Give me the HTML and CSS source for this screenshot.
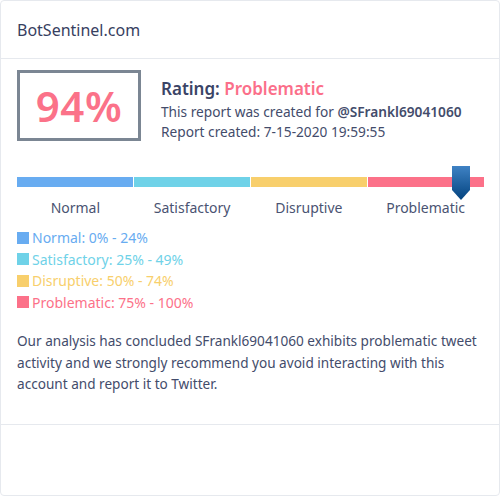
FILE: index.html
```html
<!DOCTYPE html>
<html lang="en">
<head>
<meta charset="utf-8">
<title>BotSentinel.com</title>
<link rel="stylesheet" href="styles.css">
</head>
<body>
<div class="card">
  <div class="card-header">BotSentinel.com</div>
  <div class="card-body">
    <div class="summary">
      <div class="score">94%</div>
      <div class="info">
        <div class="rating">Rating: <span class="rating-value">Problematic</span></div>
        <div class="meta">This report was created for <strong>@SFrankl69041060</strong></div>
        <div class="meta">Report created: 7-15-2020 19:59:55</div>
      </div>
    </div>

    <div class="scale">
      <div class="bar">
        <div class="seg seg-normal"></div>
        <div class="seg seg-satisfactory"></div>
        <div class="seg seg-disruptive"></div>
        <div class="seg seg-problematic"></div>
        <svg class="marker" style="left: 95.1%" width="18" height="34" viewBox="0 0 18 34">
          <defs>
            <linearGradient id="markerFill" x1="0" y1="0" x2="0" y2="1">
              <stop offset="0" stop-color="#3f82c4"/>
              <stop offset="1" stop-color="#03437f"/>
            </linearGradient>
          </defs>
          <polygon points="0,0 18,0 18,24 9,34 0,24" fill="url(#markerFill)"/>
        </svg>
      </div>
      <div class="labels">
        <span>Normal</span>
        <span>Satisfactory</span>
        <span>Disruptive</span>
        <span>Problematic</span>
      </div>
    </div>

    <ul class="legend">
      <li class="c-normal"><i class="swatch"></i>Normal: 0% - 24%</li>
      <li class="c-satisfactory"><i class="swatch"></i>Satisfactory: 25% - 49%</li>
      <li class="c-disruptive"><i class="swatch"></i>Disruptive: 50% - 74%</li>
      <li class="c-problematic"><i class="swatch"></i>Problematic: 75% - 100%</li>
    </ul>

    <p class="verdict">Our analysis has concluded SFrankl69041060 exhibits problematic tweet activity and we strongly recommend you avoid interacting with this account and report it to Twitter.</p>
  </div>
  <div class="card-footer"></div>
</div>
</body>
</html>
```
FILE: styles.css
```css
* {
  box-sizing: border-box;
}

html, body {
  margin: 0;
  padding: 0;
  background: #ffffff;
}

body {
  font-family: "Noto Sans", "Liberation Sans", sans-serif;
  color: #3d4665;
  font-size: 14px;
}

.card {
  width: 500px;
  height: 496px;
  border: 1px solid #e6e9ee;
  border-radius: 4px;
  display: flex;
  flex-direction: column;
}

.card-header {
  height: 58px;
  padding: 0 16px;
  display: flex;
  align-items: center;
  font-size: 16px;
  color: #37405f;
  border-bottom: 1px solid #e6e9ee;
}

.card-body {
  padding: 11px 16px 0;
  height: 366px;
  border-bottom: 1px solid #e6e9ee;
}

.card-footer {
  flex: 1;
}

.summary {
  display: flex;
  align-items: flex-start;
  gap: 20px;
}

.score {
  width: 124px;
  height: 71px;
  border: 3px solid #7b8693;
  display: flex;
  align-items: center;
  justify-content: center;
  font-size: 42px;
  font-weight: 600;
  color: #fb7289;
  letter-spacing: 0.5px;
}

.info {
  padding-top: 6px;
}

.rating {
  font-size: 17px;
  font-weight: 600;
  color: #3a4466;
  line-height: 26px;
}

.rating-value {
  color: #fb6f8a;
}

.meta {
  font-size: 13.7px;
  line-height: 20px;
  color: #434c6b;
}

.meta strong {
  font-weight: 600;
}

.scale {
  margin-top: 35px;
}

.bar {
  position: relative;
  display: flex;
  height: 10px;
  width: 467px;
}

.seg {
  flex: 1;
  height: 10px;
  border-right: 1px solid #ffffff;
}

.seg:last-of-type {
  border-right: 0;
}

.seg-normal { background: #68acf1; }
.seg-satisfactory { background: #6fd2e8; }
.seg-disruptive { background: #f8cf6c; }
.seg-problematic { background: #fc7189; }

.marker {
  position: absolute;
  top: -11px;
  margin-left: -9px;
}

.labels {
  display: flex;
  width: 467px;
  margin-top: 11px;
  line-height: 20px;
}

.labels span {
  flex: 1;
  text-align: center;
  font-size: 14px;
  color: #4a5372;
}

.legend {
  list-style: none;
  margin: 9px 0 0;
  padding: 0;
}

.legend li {
  display: flex;
  align-items: center;
  height: 21.5px;
  font-size: 14px;
}

.swatch {
  width: 12px;
  height: 12px;
  margin-right: 3px;
  background: currentColor;
}

.c-normal { color: #68acf1; }
.c-satisfactory { color: #6fd2e8; }
.c-disruptive { color: #f8cf6c; }
.c-problematic { color: #fc7189; }

.verdict {
  margin: 17px 0 0;
  font-size: 13.6px;
  line-height: 21.5px;
  color: #434c6b;
}
```
